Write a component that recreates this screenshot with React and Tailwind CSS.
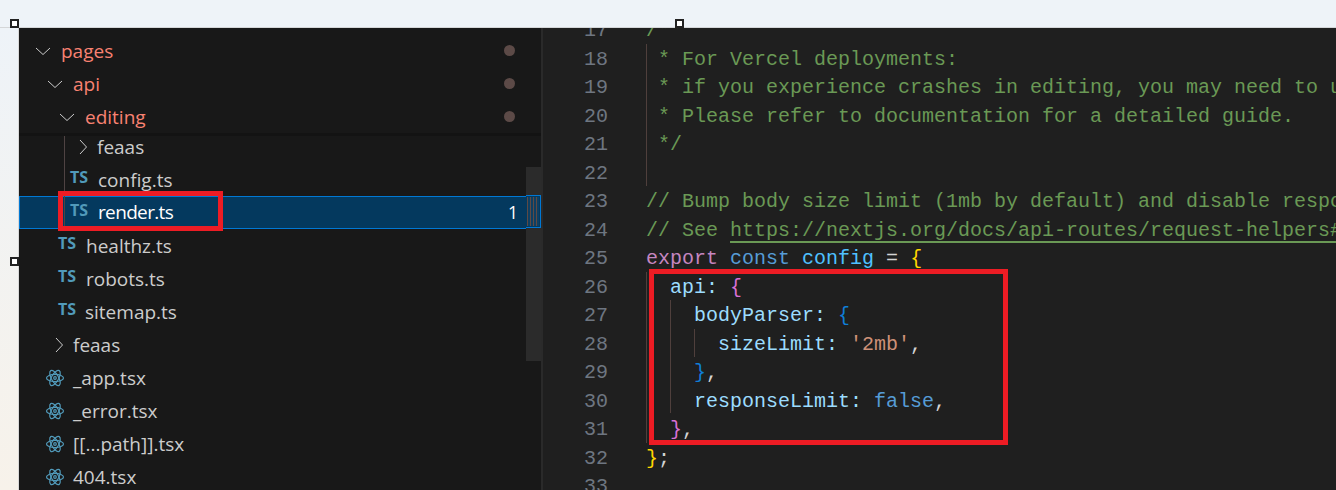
const mono = "font-['Liberation_Mono',monospace]";

function TsIcon() {
  return (
    <span className="w-[20px] shrink-0 text-[16px] font-bold leading-none text-[#519aba] font-['Open_Sans',sans-serif] relative top-[-3px]">TS</span>
  );
}

function ReactIcon() {
  return (
    <svg width="20" height="20" viewBox="0 0 20 20" fill="none" stroke="#519aba" strokeWidth="1.2" className="shrink-0">
      <ellipse cx="10" cy="10" rx="8.5" ry="3.6" />
      <ellipse cx="10" cy="10" rx="8.5" ry="3.6" transform="rotate(60 10 10)" />
      <ellipse cx="10" cy="10" rx="8.5" ry="3.6" transform="rotate(120 10 10)" />
      <circle cx="10" cy="10" r="1.3" />
    </svg>
  );
}

function Chevron({ open }) {
  return (
    <svg width="16" height="16" viewBox="0 0 16 16" fill="none" stroke="#cccccc" strokeWidth="1" className="shrink-0">
      {open ? <path d="M1 5 L8 11.5 L15 5" /> : <path d="M5 1 L11.5 8 L5 15" />}
    </svg>
  );
}

function Row({ indent, icon, children, color = "text-[#cccccc]", dot, gap = "gap-[10px]" }) {
  return (
    <div className={`flex h-[33px] items-center ${gap} ${indent} ${color}`}>
      {icon}
      <span className="whitespace-pre pt-[2px]">{children}</span>
      {dot && <span className="ml-auto mr-[26px] h-[11px] w-[11px] rounded-full bg-[#5c4a47]" />}
    </div>
  );
}

function Sidebar() {
  const git = "text-[#f98272]";
  return (
    <aside className="relative w-[522px] shrink-0 overflow-hidden bg-[#181818] font-['Open_Sans',sans-serif] text-[19px]">
      <div className="relative z-10 -mb-[6px] bg-[#181818] pt-[6px]">
        <Row indent="pl-[16px]" color={git} icon={<Chevron open />} dot>pages</Row>
        <Row indent="pl-[28px]" color={git} icon={<Chevron open />} dot>api</Row>
        <Row indent="pl-[40px]" color={git} icon={<Chevron open />} dot>editing</Row>
        <div className="h-[3px] bg-[#131313]" />
      </div>
      <Row indent="pl-[56px]" icon={<Chevron />} gap="gap-[6px]">feaas</Row>
      <Row indent="pl-[51px]" icon={<TsIcon />} gap="gap-[8px]">config.ts</Row>
      <div className="box-border flex h-[33px] items-center gap-[8px] border border-[#0078d4] bg-[#04395e] pl-[50px] text-white">
        <TsIcon />
        <span className="flex-1 tracking-[-0.65px]">render.ts</span>
        <span className="mr-[22px] text-[17.5px]">1</span>
      </div>
      <Row indent="pl-[39px]" icon={<TsIcon />} gap="gap-[8px]">healthz.ts</Row>
      <Row indent="pl-[39px]" icon={<TsIcon />} gap="gap-[8px]">robots.ts</Row>
      <Row indent="pl-[39px]" icon={<TsIcon />} gap="gap-[7px]">sitemap.ts</Row>
      <Row indent="pl-[32px]" icon={<Chevron />} gap="gap-[6px]">feaas</Row>
      <Row indent="pl-[26px]" icon={<ReactIcon />} gap="gap-[8px]">_app.tsx</Row>
      <Row indent="pl-[26px]" icon={<ReactIcon />} gap="gap-[8px]">_error.tsx</Row>
      <Row indent="pl-[26px]" icon={<ReactIcon />} gap="gap-[8px]">[[...path]].tsx</Row>
      <Row indent="pl-[26px]" icon={<ReactIcon />} gap="gap-[8px]">404.tsx</Row>
      {/* indent guide */}
      <div className="absolute left-[45px] top-[106px] h-[94px] w-px bg-[#4f4343]" />
      {/* scrollbar */}
      <div className="absolute right-0 top-[139px] h-[194px] w-[15px] bg-[#2b2b2b]" />
      <div className="absolute right-0 top-[167px] h-[33px] w-[15px] border border-l-0 border-[#0078d4] bg-[#04395e]" />
      <div className="absolute right-[2px] top-[169px] h-[29px] w-[12px] bg-[repeating-linear-gradient(90deg,#5e4a45_0px,#5e4a45_1px,#0e3f62_1px,#0e3f62_3px)]" />
    </aside>
  );
}

const C = {
  cm: "text-[#6a9955]",
  kw: "text-[#c586c0]",
  st: "text-[#569cd6]",
  cn: "text-[#4fc1ff]",
  pr: "text-[#9cdcfe]",
  op: "text-[#d4d4d4]",
  y: "text-[#ffd700]",
  p: "text-[#da70d6]",
  b: "text-[#0f7ed8]",
  s: "text-[#ce9178]",
};

const lines = [
  [17, <span className={C.cm}>/**</span>],
  [18, <span className={C.cm}> * For Vercel deployments:</span>],
  [19, <span className={C.cm}> * if you experience crashes in editing, you may need to use a larger limit</span>],
  [20, <span className={C.cm}> * Please refer to documentation for a detailed guide.</span>],
  [21, <span className={C.cm}> */</span>],
  [22, null],
  [23, <span className={C.cm}>// Bump body size limit (1mb by default) and disable response limit to allow larger data</span>],
  [24, <span className={C.cm}>// See <span className="underline decoration-2 underline-offset-[5px]">https://nextjs.org/docs/api-routes/request-helpers#custom-config</span></span>],
  [25, <><span className={C.kw}>export</span> <span className={C.st}>const</span> <span className={C.cn}>config</span> <span className={C.op}>=</span> <span className={C.y}>{"{"}</span></>],
  [26, <>  <span className={C.pr}>api</span><span className={C.pr}>:</span> <span className={C.p}>{"{"}</span></>],
  [27, <>    <span className={C.pr}>bodyParser:</span> <span className={C.b}>{"{"}</span></>],
  [28, <>      <span className={C.pr}>sizeLimit:</span> <span className={C.s}>'2mb'</span><span className={C.op}>,</span></>],
  [29, <>    <span className={C.b}>{"}"}</span><span className={C.op}>,</span></>],
  [30, <>    <span className={C.pr}>responseLimit:</span> <span className={C.st}>false</span><span className={C.op}>,</span></>],
  [31, <>  <span className={C.p}>{"}"}</span><span className={C.op}>,</span></>],
  [32, <><span className={C.y}>{"}"}</span><span className={C.op}>;</span></>],
  [33, null],
];

function Editor() {
  return (
    <main className={`relative min-w-0 flex-1 overflow-hidden border-l-2 border-[#2a2a2a] bg-[#1f1f1f] text-[20px] ${mono}`}>
      <div className="-mt-[11px]">
        {lines.map(([n, code]) => (
          <div key={n} className="flex h-[28.5px] items-center leading-[28.5px]">
            <span className="w-[65px] shrink-0 text-right text-[#6e7681]">{n}</span>
            <span className="ml-[38px] whitespace-pre">{code}</span>
          </div>
        ))}
      </div>
      {/* indent guides */}
      <div className="absolute left-[103px] top-[16px] h-[142px] w-px bg-[#4f3f3c]" />
      <div className="absolute left-[103px] top-[244px] h-[171px] w-px bg-[#4f3f3c]" />
      <div className="absolute left-[127px] top-[272px] h-[113px] w-px bg-[#4f3f3c]" />
      <div className="absolute left-[151px] top-[301px] h-[28px] w-px bg-[#4f3f3c]" />
      {/* annotation */}
      <div className="absolute left-[106px] top-[241px] h-[176px] w-[359px] border-[5px] border-[#ed1c24]" />
    </main>
  );
}

function Handle({ className }) {
  return <div className={`absolute h-[9px] w-[9px] border-2 border-[#222222] bg-white ${className}`} />;
}

export default function App() {
  return (
    <div className="relative h-[490px] w-[1336px] overflow-hidden bg-[#eef3f8]">
      <div className="h-[27px] border-b border-[#d4d6d8] box-content" />
      <div className="flex h-[462px]">
        <div className="w-[19px] shrink-0 border-r border-[#d8d8d8] bg-gradient-to-b from-[#eef3f8] to-[#f7f2ea]" />
        <Sidebar />
        <Editor />
      </div>
      <div className="absolute left-[58px] top-[191px] h-[40px] w-[165px] border-[5px] border-[#ed1c24]" />
      <Handle className="left-[10px] top-[19px]" />
      <Handle className="left-[675px] top-[19px]" />
      <Handle className="left-[10px] top-[257px]" />
    </div>
  );
}
